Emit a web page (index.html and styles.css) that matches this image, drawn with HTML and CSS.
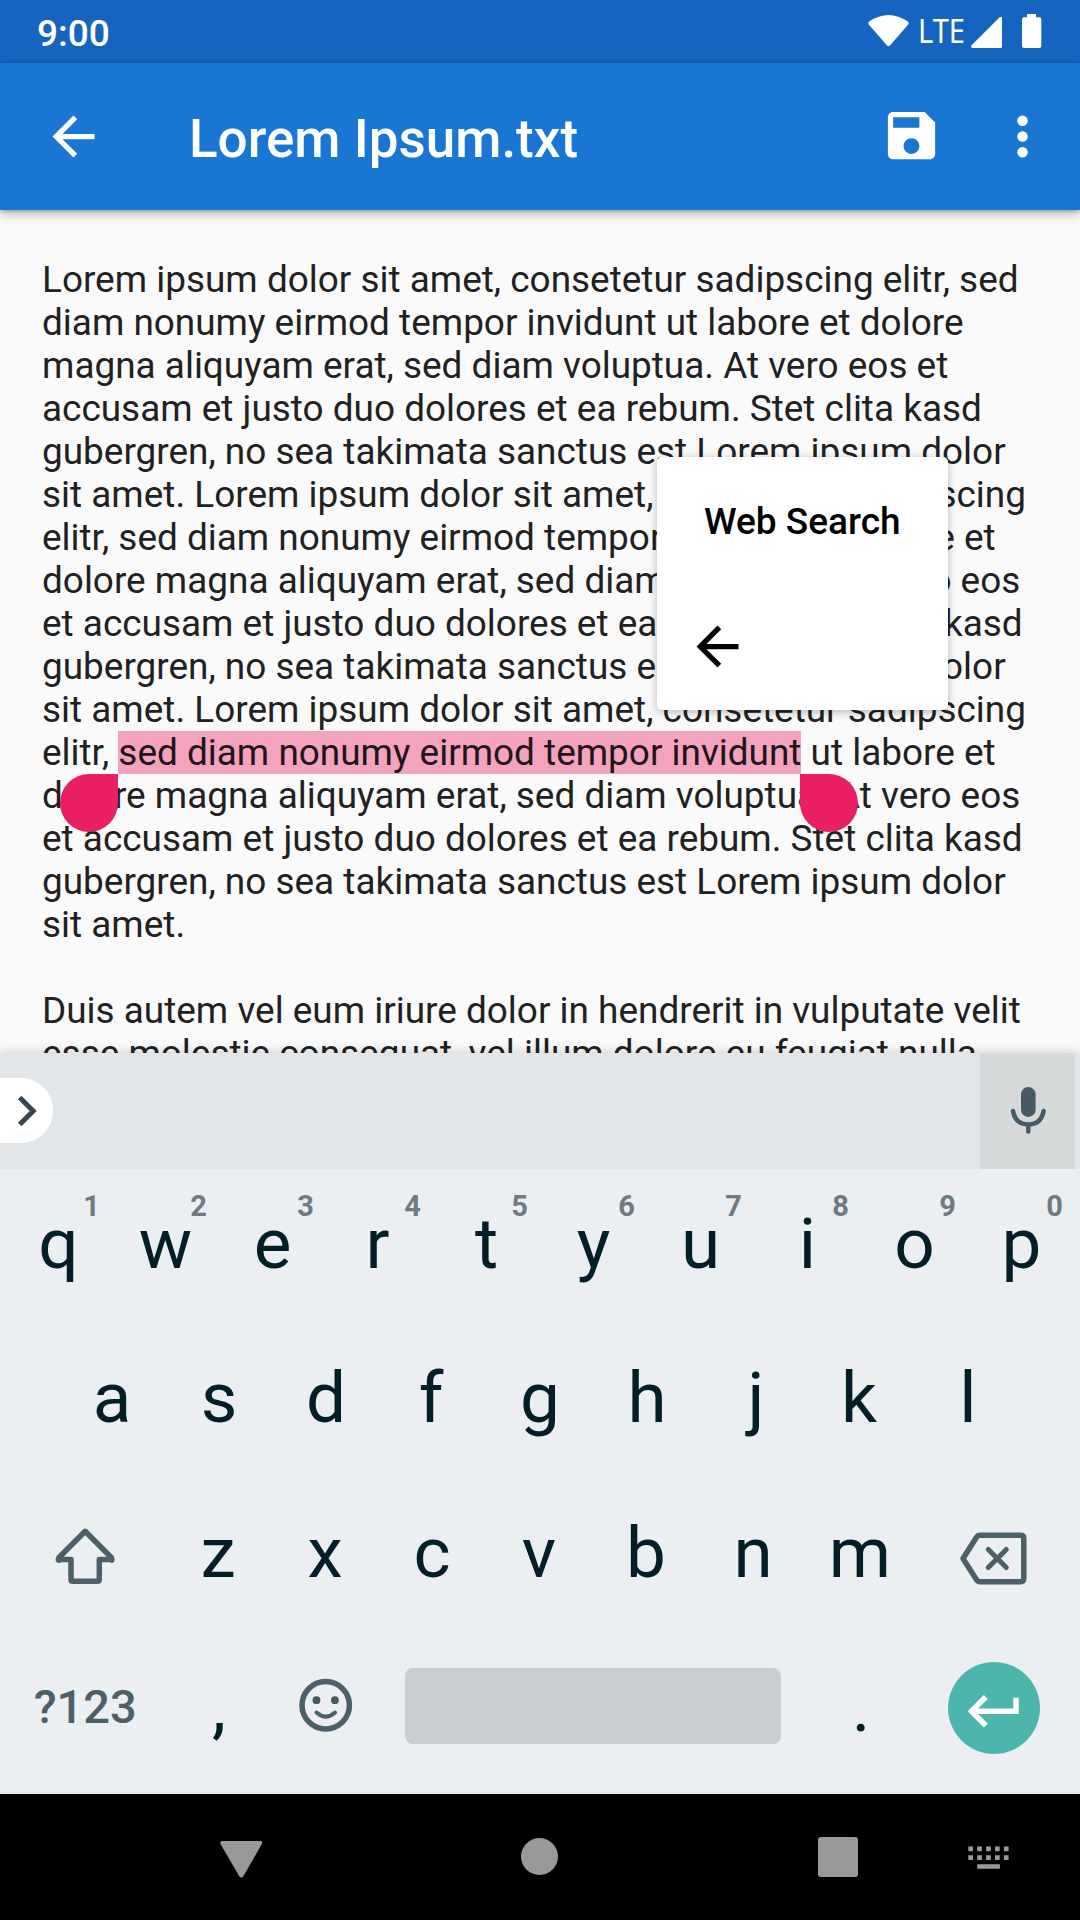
FILE: index.html
```html
<!DOCTYPE html>
<html lang="la">
<head>
<meta charset="utf-8">
<title>Lorem Ipsum.txt</title>
<link rel="stylesheet" href="styles.css">
</head>
<body>
<div class="screen">
  <header class="status">
    <span class="clock">9:00</span>
    <svg class="status-icons" width="176" height="63" viewBox="866 0 176 63">
      <path d="M868.6 24.2Q867.6 22.6 869.2 21.6Q888.500 8.600 907.8 21.600Q909.400 22.600 908.400 24.200L890 45.600Q888.500 47 887 45.600Z"/>
      <text class="lte" x="918" y="43" textLength="47" lengthAdjust="spacingAndGlyphs">LTE</text>
      <path d="M971.600 45.200L999.400 17.400Q1002 16 1002 18V46.500Q1002 48 1000.500 48H972.500Q970.500 47.500 971.600 45.200Z"/>
      <path d="M1027 14H1036V17.300H1039.500Q1041.300 17.300 1041.300 19.300V46Q1041.300 48 1039.500 48H1024Q1022 48 1022 46V19.300Q1022 17.300 1024 17.300H1027Z"/>
    </svg>
  </header>
  <div class="appbar">
    <svg class="icon" viewBox="0 0 24 24"><path d="M20 11H7.830l5.590-5.590L12 4l-8 8 8 8 1.410-1.410L7.830 13H20v-2z"/></svg>
    <h1 class="title">Lorem Ipsum.txt</h1>
    <svg class="icon save" viewBox="0 0 24 24"><path fill-rule="evenodd" d="M17 3H5c-1.110 0-2 .9-2 2v14c0 1.100.89 2 2 2h14c1.100 0 2-.9 2-2V7l-4-4zm-5 16c-1.660 0-3-1.340-3-3s1.340-3 3-3 3 1.340 3 3-1.340 3-3 3zm3-10H5V5h10v4z"/></svg>
    <svg class="icon more" viewBox="0 0 24 24"><circle cx="12" cy="6" r="2"/><circle cx="12" cy="12" r="2"/><circle cx="12" cy="18" r="2"/></svg>
  </div>
  <main class="editor">
    <p class="text">Lorem ipsum dolor sit amet, consetetur sadipscing elitr, sed<br>diam nonumy eirmod tempor invidunt ut labore et dolore<br>magna aliquyam erat, sed diam voluptua. At vero eos et<br>accusam et justo duo dolores et ea rebum. Stet clita kasd<br>gubergren, no sea takimata sanctus est Lorem ipsum dolor<br>sit amet. Lorem ipsum dolor sit amet, consetetur sadipscing<br>elitr, sed diam nonumy eirmod tempor invidunt ut labore et<br>dolore magna aliquyam erat, sed diam voluptua. At vero eos<br>et accusam et justo duo dolores et ea rebum. Stet clita kasd<br>gubergren, no sea takimata sanctus est Lorem ipsum dolor<br>sit amet. Lorem ipsum dolor sit amet, consetetur sadipscing<br>elitr, <span class="selection">sed diam nonumy eirmod tempor invidunt</span> ut labore et<br>dolore magna aliquyam erat, sed diam voluptua. At vero eos<br>et accusam et justo duo dolores et ea rebum. Stet clita kasd<br>gubergren, no sea takimata sanctus est Lorem ipsum dolor<br>sit amet.</p>
    <p class="text">Duis autem vel eum iriure dolor in hendrerit in vulputate velit<br>esse molestie consequat, vel illum dolore eu feugiat nulla</p>
    <span class="handle handle-start"></span>
    <span class="handle handle-end"></span>
    <div class="popup">
      <span class="popup-item">Web Search</span>
      <svg class="icon popup-back" viewBox="0 0 24 24"><path d="M20 11H7.830l5.590-5.590L12 4l-8 8 8 8 1.410-1.410L7.830 13H20v-2z"/></svg>
    </div>
  </main>
  <section class="keyboard">
    <div class="suggestions">
      <div class="expand"><svg width="24" height="36" viewBox="15 1093 24 36"><path class="chevron" d="M19.700 1097.500L33.200 1111L19.700 1124.500"/></svg></div>
      <div class="mic"><svg width="36" height="50" viewBox="1010 1086 36 50"><rect class="slate" x="1021" y="1087" width="14.600" height="30" rx="7.300"/><path class="mic-arc" d="M1013 1111Q1015.500 1124.500 1028.300 1124.500Q1041 1124.500 1043.600 1111M1028.300 1124.500V1131.500"/></svg></div>
    </div>
    <div class="keys">
      <div class="row">
        <span class="key">q<sup>1</sup></span><span class="key">w<sup>2</sup></span><span class="key">e<sup>3</sup></span><span class="key lean-left">r<sup>4</sup></span><span class="key">t<sup>5</sup></span><span class="key">y<sup>6</sup></span><span class="key">u<sup>7</sup></span><span class="key">i<sup>8</sup></span><span class="key">o<sup>9</sup></span><span class="key">p<sup>0</sup></span>
      </div>
      <div class="row">
        <span class="key">a</span><span class="key">s</span><span class="key">d</span><span class="key lean-left">f</span><span class="key">g</span><span class="key">h</span><span class="key lean-right">j</span><span class="key lean-left">k</span><span class="key">l</span>
      </div>
      <div class="row shifted">
        <span class="key wide"><svg width="160" height="80" viewBox="4 1513 160 80"><path class="outline" d="M85.200 1531.300L59 1557.500Q57 1561.500 60.500 1559.500H71V1579.500Q71 1581.300 73 1581.300H97.300Q99.300 1581.300 99.300 1579.500V1559.500H110Q113.300 1561.500 111.300 1557.500Z"/></svg></span>
        <span class="key">z</span><span class="key">x</span><span class="key">c</span><span class="key">v</span><span class="key">b</span><span class="key">n</span><span class="key">m</span>
        <span class="key wide"><svg width="160" height="80" viewBox="914 1513 160 80"><path class="outline" d="M963 1558.500L976.500 1537.300Q977.700 1535.300 980 1535.300H1020.500Q1023.800 1535.300 1023.800 1538.500V1578.500Q1023.800 1581.700 1020.500 1581.700H980Q977.700 1581.700 976.500 1579.700Z"/><path class="cross" d="M988.300 1549.500L1006.300 1567.500M1006.300 1549.500L988.300 1567.500"/></svg></span>
      </div>
      <div class="row shifted">
        <span class="key wide symbols">?123</span>
        <span class="key mark">,</span>
        <span class="key"><svg width="64" height="64" viewBox="292.800 1675.300 64 64"><circle class="outline" cx="325.500" cy="1705.500" r="23.700"/><circle class="slate" cx="316.300" cy="1700.500" r="3.900"/><circle class="slate" cx="334.700" cy="1700.500" r="3.900"/><path class="smile" d="M316.300 1712.800Q325.500 1721 334.900 1712.800"/></svg></span>
        <span class="space"></span>
        <span class="key mark">.</span>
        <span class="key wide"><span class="enter"><svg width="92" height="92" viewBox="948 1662 92 92"><path class="enter-arrow" d="M1016 1697.800V1711.300H972.500M985.800 1697L971.500 1711.300L985.800 1725.500"/></svg></span></span>
      </div>
    </div>
  </section>
  <nav class="navbar">
    <svg width="1080" height="126" viewBox="0 1794 1080 126">
      <path d="M222 1841H260.500Q263 1841.500 261.800 1844L243.200 1876.500Q241.300 1878.500 239.400 1876.500L220.500 1844Q219.500 1841.500 222 1841Z"/>
      <circle cx="539.500" cy="1856.500" r="18.500"/>
      <rect x="818" y="1837" width="40" height="40" rx="3"/>
      <path d="M968.300 1846.500h4.700v4.700h-4.700zM977.200 1846.500h4.700v4.700h-4.700zM986.100 1846.500h4.700v4.700h-4.700zM995 1846.500h4.700v4.700h-4.700zM1003.900 1846.500h4.700v4.700h-4.700zM968.300 1855.200h4.700v4.700h-4.700zM977.200 1855.200h4.700v4.700h-4.700zM986.100 1855.200h4.700v4.700h-4.700zM995 1855.200h4.700v4.700h-4.700zM1003.900 1855.200h4.700v4.700h-4.700zM977.200 1864.200h22.700v4.600h-22.700z"/>
    </svg>
  </nav>
</div>
</body>
</html>
```
FILE: styles.css
```css
* { box-sizing: border-box; }
body { margin: 0; font-family: Roboto, sans-serif; }
svg { display: block; flex: none; }
.screen { width: 1080px; height: 1920px; display: flex; flex-direction: column; overflow: hidden; background: #fafafa; }

.status { height: 63px; flex: none; display: flex; align-items: center; justify-content: space-between; padding: 0 38px 0 37px; background: #1565c0; color: #fff; }
.clock { font-size: 37px; font-weight: 500; line-height: 43px; padding-top: 3px; }
.status-icons { fill: #fff; }
.lte { font-family: "Noto Sans", sans-serif; font-size: 32px; }

.appbar { height: 147px; flex: none; display: flex; align-items: center; padding: 0 26px 0 42px; background: #1976d2; color: #fff; position: relative; z-index: 2; box-shadow: 0 3px 10px rgba(0,0,0,.32), 0 1px 3px rgba(0,0,0,.2); }
.icon { width: 63px; height: 63px; fill: currentColor; }
.title { margin: 5px 0 0 84px; font-size: 53px; font-weight: 500; line-height: 62px; flex: 1; }
.save { margin: -2px 48px 0 0; }

.editor { height: 843px; flex: none; padding: 48px 0 0 42px; position: relative; overflow: hidden; color: #212121; }
.text { margin: 0 0 43px; font-size: 36.93px; line-height: 43px; white-space: nowrap; }
.selection { background: #f4a3be; color: #20151a; }
.handle { position: absolute; top: 564px; width: 58px; height: 58px; background: #e91e63; }
.handle-start { left: 60px; border-radius: 50% 0 50% 50%; }
.handle-end { left: 800px; border-radius: 0 50% 50% 50%; }
.popup { position: absolute; left: 657px; top: 247px; width: 291px; height: 253px; padding: 43px 0 0 29px; display: flex; flex-direction: column; gap: 72px; background: #fff; border-radius: 5px; box-shadow: 0 2px 8px rgba(0,0,0,.28); color: #000; }
.popup-item { padding-left: 18px; font-size: 37px; font-weight: 500; line-height: 43px; }

.keyboard { height: 741px; flex: none; background: #ebeff2; position: relative; z-index: 1; box-shadow: 0 0 12px rgba(0,0,0,.2); }
.suggestions { height: 116px; display: flex; align-items: center; justify-content: space-between; padding-right: 5px; background: #e2e6e9; }
.expand { width: 53px; height: 65px; padding-left: 15px; display: flex; align-items: center; background: #fff; border-radius: 0 32px 32px 0; margin-top: -1px; }
.mic { width: 95px; height: 116px; display: flex; align-items: center; justify-content: center; background: #d5d9da; }
.chevron { fill: none; stroke: #37474f; stroke-width: 5; }
.slate { fill: #455a64; }
.mic-arc { fill: none; stroke: #455a64; stroke-width: 4.500; stroke-linecap: round; }
.keys { padding: 0 5px; }
.row { height: 154.5px; padding-bottom: 5px; display: flex; align-items: center; justify-content: center; }
.shifted { padding-right: 2px; }
.key { width: 107px; flex: none; position: relative; display: flex; align-items: center; justify-content: center; font-size: 71px; line-height: 84px; color: #041e28; }
.key sup { position: absolute; right: 12px; top: -13px; font-size: 29px; font-weight: 700; line-height: 34px; color: #6f7b82; }
.lean-left { padding-right: 4px; }
.lean-right { padding-left: 4px; }
.mark { padding-left: 2px; }
.wide { width: 160.5px; }
.symbols { padding-left: 2px; font-size: 47px; font-weight: 500; color: #4d5f67; }
.outline { fill: none; stroke: #4d5f67; stroke-width: 5.500; stroke-linejoin: round; }
.cross, .smile { fill: none; stroke: #4d5f67; stroke-width: 5; stroke-linecap: round; }
.smile { stroke-width: 4; }
.space { width: 376px; height: 76px; margin: -3px 26px 0 26px; border-radius: 8px; background: #c9cdd0; flex: none; }
.enter { width: 92px; height: 92px; margin-top: 2px; border-radius: 50%; background: #4db6ac; }
.enter-arrow { fill: none; stroke: #fff; stroke-width: 5.500; }

.navbar { height: 126px; flex: none; background: #000; fill: #999; position: relative; z-index: 2; }
```
